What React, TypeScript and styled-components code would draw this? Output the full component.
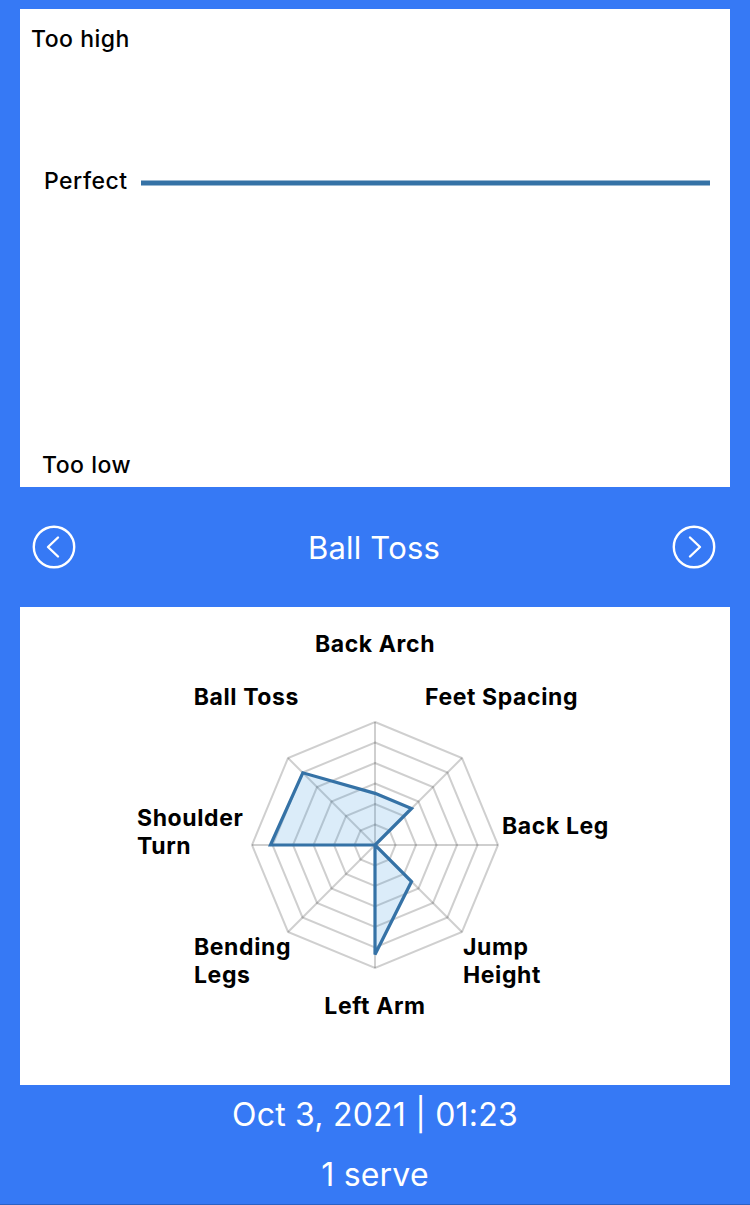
import React from "react";
import styled, { createGlobalStyle } from "styled-components";

const BLUE = "#3679f5";
const LINE = "#3572a6";

const GlobalStyle = createGlobalStyle`
  html, body {
    margin: 0;
    padding: 0;
    background: ${BLUE};
  }
  body {
    font-family: Inter, "Noto Sans", "Liberation Sans", sans-serif;
    -webkit-font-smoothing: antialiased;
  }
`;

const Page = styled.div`
  width: 750px;
  height: 1205px;
  box-sizing: border-box;
  padding: 9px 20px 0;
  background: ${BLUE};
  border-bottom: 1px solid #2c62c4;
  display: flex;
  flex-direction: column;
`;

const Panel = styled.section`
  height: 478px;
  background: #ffffff;
  flex-shrink: 0;
`;

const ChartSvg = styled.svg`
  display: block;
  width: 710px;
  height: 478px;
`;

const AxisText = styled.text<{ $weight?: number }>`
  font-family: Inter, "Noto Sans", "Liberation Sans", sans-serif;
  font-size: 23px;
  letter-spacing: ${(p) => ((p.$weight ?? 500) >= 700 ? "0.6px" : "0.5px")};
  font-weight: ${(p) => p.$weight ?? 500};
  fill: #000;
`;

const NavRow = styled.nav`
  height: 120px;
  flex-shrink: 0;
  display: flex;
  align-items: center;
  justify-content: space-between;
  padding: 0 14px 0 12px;
`;

const NavTitle = styled.h1`
  margin: 0;
  font-family: Inter, "Noto Sans", "Liberation Sans", sans-serif;
  font-weight: 400;
  font-size: 31px;
  letter-spacing: 0.2px;
  color: #fff;
`;

const NavButton = styled.button`
  width: 44px;
  height: 44px;
  padding: 0;
  border: none;
  background: transparent;
  display: flex;
  align-items: center;
  justify-content: center;
  cursor: pointer;
`;

const Footer = styled.footer`
  display: flex;
  flex-direction: column;
  align-items: center;
`;

const FooterLine = styled.div`
  font-family: Inter, "Noto Sans", "Liberation Sans", sans-serif;
  font-size: 32px;
  letter-spacing: 0.2px;
  line-height: 60px;
  color: #fff;
  font-weight: 400;
`;

const ChevronCircle: React.FC<{ dir: "left" | "right" }> = ({ dir }) => {
  const s = dir === "left" ? 1 : -1;
  const pts = `${22 + 4 * s},${12.5} ${22 - 6 * s},22 ${22 + 4 * s},${31.5}`;
  return (
    <svg width="44" height="44" viewBox="0 0 44 44" fill="none">
      <circle cx="22" cy="22" r="20.2" stroke="#fff" strokeWidth="2.4" />
      <polyline
        points={pts}
        stroke="#fff"
        strokeWidth="2.4"
        strokeLinecap="round"
        strokeLinejoin="round"
      />
    </svg>
  );
};

const HeightChart: React.FC = () => (
  <ChartSvg viewBox="0 0 710 478">
    <AxisText x={11} y={38}>Too high</AxisText>
    <AxisText x={24} y={180}>Perfect</AxisText>
    <line x1={121} y1={174} x2={690} y2={174} stroke={LINE} strokeWidth={5} />
    <AxisText x={22} y={464}>Too low</AxisText>
  </ChartSvg>
);

type Label = { lines: string[]; x: number; y: number; anchor: "start" | "middle" | "end" };

const CX = 355;
const CY = 238;
const R = 123;
const values = [0.42, 0.42, 0, 0.42, 0.89, 0, 0.85, 0.83];
const labels: Label[] = [
  { lines: ["Back Arch"], x: 355, y: 45, anchor: "middle" },
  { lines: ["Feet Spacing"], x: 405, y: 98, anchor: "start" },
  { lines: ["Back Leg"], x: 482, y: 227, anchor: "start" },
  { lines: ["Jump", "Height"], x: 443, y: 348, anchor: "start" },
  { lines: ["Left Arm"], x: 355, y: 407, anchor: "middle" },
  { lines: ["Bending", "Legs"], x: 174, y: 348, anchor: "start" },
  { lines: ["Shoulder", "Turn"], x: 117, y: 219, anchor: "start" },
  { lines: ["Ball Toss"], x: 279, y: 98, anchor: "end" },
];

const pt = (i: number, r: number) => {
  const a = (i * Math.PI) / 4 - Math.PI / 2;
  return [CX + r * Math.cos(a), CY + r * Math.sin(a)];
};

const ring = (r: number) =>
  Array.from({ length: 8 }, (_, i) => pt(i, r).map((v) => v.toFixed(2)).join(",")).join(" ");

const RadarChart: React.FC = () => (
  <ChartSvg viewBox="0 0 710 478">
    <g stroke="rgba(0,0,0,0.19)" strokeWidth={2} fill="none">
      {[1, 2, 3, 4, 5, 6].map((k) => (
        <polygon key={k} points={ring((R * k) / 6)} />
      ))}
      {Array.from({ length: 8 }, (_, i) => {
        const [x, y] = pt(i, R);
        return <line key={i} x1={CX} y1={CY} x2={x} y2={y} />;
      })}
    </g>
    <polygon
      points={values.map((v, i) => pt(i, v * R).map((n) => n.toFixed(2)).join(",")).join(" ")}
      fill="rgba(54,150,220,0.18)"
      stroke={LINE}
      strokeWidth={3.2}
      strokeLinejoin="miter"
    />
    {labels.map((l, i) => (
      <AxisText key={i} $weight={700} x={l.x} y={l.y} textAnchor={l.anchor}>
        {l.lines.map((line, j) => (
          <tspan key={j} x={l.x} dy={j === 0 ? 0 : 28}>
            {line}
          </tspan>
        ))}
      </AxisText>
    ))}
  </ChartSvg>
);

export default function App() {
  return (
    <>
      <GlobalStyle />
      <Page>
        <Panel>
          <HeightChart />
        </Panel>
        <NavRow>
          <NavButton aria-label="Previous">
            <ChevronCircle dir="left" />
          </NavButton>
          <NavTitle>Ball Toss</NavTitle>
          <NavButton aria-label="Next">
            <ChevronCircle dir="right" />
          </NavButton>
        </NavRow>
        <Panel>
          <RadarChart />
        </Panel>
        <Footer>
          <FooterLine>Oct 3, 2021 | 01:23</FooterLine>
          <FooterLine>1 serve</FooterLine>
        </Footer>
      </Page>
    </>
  );
}
